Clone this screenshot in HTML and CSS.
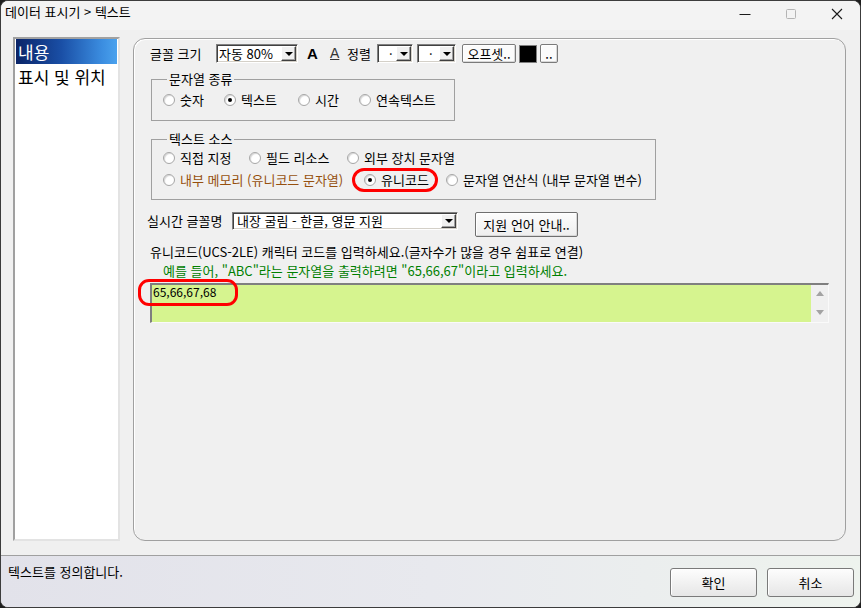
FILE: index.html
```html
<!DOCTYPE html>
<html lang="ko">
<head>
<meta charset="utf-8">
<title>데이터 표시기 &gt; 텍스트</title>
<link rel="stylesheet" href="styles.css">
</head>
<body>
<div class="window">
  <div class="titlebar">
    <span class="title">데이터 표시기 &gt; 텍스트</span>
    <div class="controls">
      <span class="ctl"><svg width="12" height="12" viewBox="0 0 12 12"><line x1="0.5" y1="6.5" x2="11.5" y2="6.5" stroke="#1a1a1a" stroke-width="1"/></svg></span>
      <span class="ctl"><svg width="12" height="12" viewBox="0 0 12 12"><rect x="1.5" y="1.5" width="9" height="9" rx="1" fill="none" stroke="#b4b4b4" stroke-width="1"/></svg></span>
      <span class="ctl"><svg width="12" height="12" viewBox="0 0 12 12"><path d="M1 1 L11 11 M11 1 L1 11" stroke="#1a1a1a" stroke-width="1.1" fill="none"/></svg></span>
    </div>
  </div>

  <div class="body">
    <ul class="list">
      <li class="item selected">내용</li>
      <li class="item">표시 및 위치</li>
    </ul>

    <div class="panel">
      <div class="row-font">
        <span class="lbl lbl-size">글꼴 크기</span>
        <div class="combo combo-size"><span class="combo-text">자동 80%</span><span class="combo-btn"></span></div>
        <span class="glyph-bold">A</span>
        <span class="glyph-under">A</span>
        <span class="lbl lbl-align">정렬</span>
        <div class="combo combo-sm"><span class="combo-text dot-text">·</span><span class="combo-btn"></span></div>
        <div class="combo combo-sm2"><span class="combo-text dot-text">·</span><span class="combo-btn"></span></div>
        <button class="btn btn-offset">오프셋..</button>
        <span class="swatch"></span>
        <button class="btn btn-dots">..</button>
      </div>

      <fieldset class="group group-type">
        <legend>문자열 종류</legend>
        <div class="radios">
          <label class="radio w61"><span class="circle"></span>숫자</label>
          <label class="radio w74"><span class="circle checked"></span>텍스트</label>
          <label class="radio w61"><span class="circle"></span>시간</label>
          <label class="radio"><span class="circle"></span>연속텍스트</label>
        </div>
      </fieldset>

      <fieldset class="group group-src">
        <legend>텍스트 소스</legend>
        <div class="radios">
          <label class="radio w86"><span class="circle"></span>직접 지정</label>
          <label class="radio w98"><span class="circle"></span>필드 리소스</label>
          <label class="radio"><span class="circle"></span>외부 장치 문자열</label>
        </div>
        <div class="radios radios-2">
          <label class="radio w201 brown"><span class="circle"></span>내부 메모리 (유니코드 문자열)</label>
          <label class="radio w82"><span class="circle checked"></span>유니코드</label>
          <label class="radio"><span class="circle"></span>문자열 연산식 (내부 문자열 변수)</label>
        </div>
      </fieldset>

      <div class="row-rt">
        <span class="lbl lbl-rt">실시간 글꼴명</span>
        <div class="combo combo-font"><span class="combo-text">내장 굴림 - 한글, 영문 지원</span><span class="combo-btn"></span></div>
        <button class="btn btn-lang">지원 언어 안내..</button>
      </div>

      <p class="hint">유니코드(UCS-2LE) 캐릭터 코드를 입력하세요.(글자수가 많을 경우 쉼표로 연결)</p>
      <p class="example">예를 들어, "ABC"라는 문자열을 출력하려면 "65,66,67"이라고 입력하세요.</p>

      <div class="textarea">
        <div class="ta-text">65,66,67,68</div>
        <div class="scroll"><span class="arr up"></span><span class="arr down"></span></div>
      </div>

      <span class="mark mark-uni"></span>
      <span class="mark mark-code"></span>
    </div>
  </div>

  <div class="status">
    <span class="status-text">텍스트를 정의합니다.</span>
    <button class="btn-big btn-ok">확인</button>
    <button class="btn-big btn-cancel">취소</button>
  </div>
</div>
</body>
</html>
```

FILE: styles.css
```css
* { box-sizing: border-box; }
html, body { margin: 0; padding: 0; }
body {
  width: 861px;
  height: 608px;
  background: #1e1e1e;
  font-family: "Noto Sans CJK KR", sans-serif;
  font-size: 13px;
  color: #000;
  overflow: hidden;
}

.window {
  width: 861px;
  height: 608px;
  background: #f0f0f0;
  border: 1px solid #3c3c3c;
  border-radius: 8px;
  display: flex;
  flex-direction: column;
  overflow: hidden;
}

/* title bar */
.titlebar {
  flex: none;
  height: 29px;
  background: #f3f3f3;
  display: flex;
  align-items: flex-start;
}
.title {
  margin: 4px 0 0 4px;
  line-height: 14px;
  font-size: 13px;
}
.controls { margin-left: auto; display: flex; }
.ctl {
  width: 46px;
  height: 26px;
  display: flex;
  align-items: center;
  justify-content: center;
}

/* body */
.body {
  flex: none;
  height: 511px;
  display: flex;
  padding: 7px 0 0 12px;
}

.list {
  flex: none;
  width: 107px;
  height: 504px;
  margin: 0;
  padding: 0 1px;
  list-style: none;
  background: #fff;
  border-style: solid;
  border-width: 2px;
  border-color: #a0a0a0 #e3e3e3 #e3e3e3 #a0a0a0;
}
.item {
  height: 25px;
  line-height: 25px;
  padding-left: 2px;
  font-size: 17px;
}
.item.selected {
  color: #fff;
  background: linear-gradient(to right, #0a2468 0%, #1a4fa6 45%, #3b8de0 85%, #4aa2ee 100%);
}

.panel {
  flex: none;
  position: relative;
  width: 713px;
  height: 503px;
  margin-left: 13px;
  margin-top: 1px;
  border: 1px solid #a0a0a0;
  border-radius: 12px;
  box-shadow: inset 1px 1px 0 #fff;
}

/* first row */
.row-font {
  display: flex;
  align-items: center;
  height: 19px;
  margin-top: 5px;
}
.row-font > * { flex: none; }
.lbl { line-height: 18px; }
.lbl-size { margin-left: 16px; width: 66px; }
.lbl-align { width: 30px; }

.combo {
  display: flex;
  height: 19px;
  padding: 1px;
  background: #fff;
  border: 1px solid;
  border-color: #808080 #fff #fff #808080;
  box-shadow: inset 1px 1px 0 #404040, inset -1px -1px 0 #d4d0c8;
}
.combo-text {
  flex: 1;
  padding-left: 1px;
  line-height: 15px;
  white-space: nowrap;
}
.dot-text { padding-left: 10px; }
.combo-btn {
  flex: none;
  width: 15px;
  display: flex;
  align-items: center;
  justify-content: center;
  background: #f0f0f0;
  border: 1px solid;
  border-color: #fff #404040 #404040 #fff;
  box-shadow: inset -1px -1px 0 #a0a0a0;
}
.combo-btn::after {
  content: "";
  width: 0;
  height: 0;
  border-left: 4px solid transparent;
  border-right: 4px solid transparent;
  border-top: 4px solid #000;
}
.combo-size { width: 82px; }
.combo-sm { width: 36px; }
.combo-sm2 { width: 39px; margin-left: 4px; }

.glyph-bold {
  width: 23px;
  margin-left: 9px;
  font: bold 15px/19px "Liberation Sans", sans-serif;
}
.glyph-under {
  width: 17px;
  font: 14px/19px "Liberation Sans", sans-serif;
  color: #333;
  text-decoration: underline;
}

.btn {
  font-family: inherit;
  font-size: 13px;
  color: #000;
  padding: 0;
  background: #fbfbfb;
  border: 1px solid #7a7a7a;
  border-radius: 2px;
  box-shadow: inset 1px 1px 0 #fff, inset -1px -1px 0 #d8d8d8;
  line-height: 15px;
  white-space: nowrap;
}
.btn-offset { margin-left: 6px; width: 54px; height: 19px; }
.swatch {
  margin-left: 3px;
  width: 18px;
  height: 18px;
  background: #000;
  border: 1px solid #808080;
}
.btn-dots { margin-left: 3px; width: 18px; height: 19px; }

/* group boxes */
.group {
  margin: 0;
  min-width: 0;
  border: 1px solid #a0a0a0;
  border-radius: 0;
}
.group legend {
  padding: 0 2px;
  margin-left: 4px;
  line-height: 14px;
}
.group-type {
  width: 304px;
  margin: 9px 0 0 17px;
  padding: 7px 0 13px 11px;
}
.group-src {
  width: 505px;
  margin: 11px 0 0 17px;
  padding: 5px 0 12px 11px;
}
.radios {
  display: flex;
  height: 14px;
  align-items: center;
}
.radios-2 { margin-top: 8px; }
.radio {
  flex: none;
  display: flex;
  align-items: center;
  line-height: 14px;
  white-space: nowrap;
}
.circle {
  flex: none;
  width: 12px;
  height: 12px;
  margin-right: 5px;
  border-radius: 50%;
  background: #fff;
  border: 1px solid #a6a6a6;
  box-shadow: inset 1px 1px 1px #d6d6d6;
  display: flex;
  align-items: center;
  justify-content: center;
}
.circle.checked::after {
  content: "";
  width: 4px;
  height: 4px;
  border-radius: 50%;
  background: #000;
}
.w61 { width: 61px; }
.w74 { width: 74px; }
.w86 { width: 86px; }
.w98 { width: 98px; }
.w201 { width: 201px; }
.w82 { width: 82px; }
.brown { color: #96500e; }

/* realtime font row */
.row-rt {
  display: flex;
  align-items: flex-start;
  margin-top: 12px;
}
.row-rt > * { flex: none; }
.lbl-rt { margin-left: 13px; width: 85px; }
.combo-font { width: 226px; height: 18px; }
.combo-font .combo-text { padding-left: 3px; line-height: 14px; }
.btn-lang {
  margin-left: 17px;
  width: 103px;
  height: 25px;
  background: linear-gradient(#fdfdfd, #eeeeee);
  border-color: #6f6f6f;
}

.hint {
  margin: 8px 0 0 16px;
  line-height: 14px;
  white-space: nowrap;
}
.example {
  margin: 5px 0 0 29px;
  line-height: 14px;
  color: #008000;
  white-space: nowrap;
}

.textarea {
  display: flex;
  width: 679px;
  height: 40px;
  margin: 5px 0 0 16px;
  border-style: solid;
  border-width: 2px 1px 1px 2px;
  border-color: #7f7f7f #fafafa #fafafa #7f7f7f;
}
.ta-text {
  flex: 1;
  background: #d6f48f;
  padding: 0 0 0 1px;
  font-size: 12px;
  line-height: 14px;
}
.scroll {
  flex: none;
  width: 17px;
  background: #f0f0f0;
  display: flex;
  flex-direction: column;
  align-items: center;
  justify-content: space-between;
  padding: 6px 0 7px;
}
.arr {
  width: 0;
  height: 0;
  border-left: 4px solid transparent;
  border-right: 4px solid transparent;
}
.arr.up { border-bottom: 5px solid #a3a3a3; }
.arr.down { border-top: 5px solid #a3a3a3; }

/* red annotation ovals */
.mark {
  position: absolute;
  border: 3px solid #f00;
  border-radius: 12px;
}
.mark-uni { left: 218px; top: 129px; width: 86px; height: 24px; }
.mark-code { left: 4px; top: 240px; width: 100px; height: 27px; border-radius: 11px; }

/* status area */
.status {
  flex: 1;
  margin-top: 14px;
  display: flex;
  align-items: flex-start;
  border-top: 1px solid #a0a0a0;
  background: linear-gradient(to right, #e2e2ea, #e8e9ee 50%, #eef3ee);
  padding: 0 6px 0 7px;
}
.status-text {
  margin-top: 8px;
  font-size: 13px;
  line-height: 16px;
}
.btn-big {
  margin-top: 12px;
  width: 87px;
  height: 29px;
  font-family: inherit;
  font-size: 13px;
  color: #000;
  background: linear-gradient(#fdfdfd, #e6e6e6);
  border: 1px solid #7a7a7a;
  border-radius: 3px;
  box-shadow: inset 1px 1px 0 #fff;
  padding: 0;
}
.btn-ok { margin-left: auto; }
.btn-cancel { margin-left: 10px; }
```
